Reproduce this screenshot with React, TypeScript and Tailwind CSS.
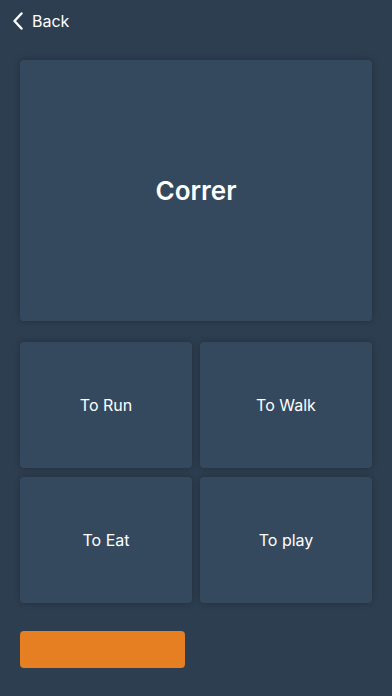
import React from "react";

const Card = ({ label }: { label: string }) => (
  <div className="h-[126px] rounded-[4px] bg-[#34495e] shadow-[0_0_6px_rgba(0,0,0,0.25)] flex items-center justify-center">
    <span className="text-[16px] text-white">{label}</span>
  </div>
);

export default function App() {
  return (
    <div
      className="w-[392px] h-[696px] overflow-hidden bg-[#2d3e50] flex flex-col"
      style={{ fontFamily: "Inter, Roboto, 'Liberation Sans', sans-serif" }}
    >
      <div className="h-[42px] flex items-center pl-[12px] text-white">
        <svg width="12" height="18" viewBox="0 0 12 18" fill="none">
          <path d="M9.5 1.5 L2.5 9 L9.5 16.5" stroke="white" strokeWidth="2.4" strokeLinecap="round" strokeLinejoin="round" />
        </svg>
        <span className="ml-[8px] text-[16px] leading-none">Back</span>
      </div>
      <div className="px-[20px] pt-[18px] flex flex-col">
        <div className="h-[261px] rounded-[4px] bg-[#34495e] shadow-[0_0_6px_rgba(0,0,0,0.25)] flex items-center justify-center">
          <span className="text-[26px] font-semibold text-white">Correr</span>
        </div>
        <div className="mt-[21px] grid grid-cols-2 gap-[8px] gap-y-[9px]">
          <Card label="To Run" />
          <Card label="To Walk" />
          <Card label="To Eat" />
          <Card label="To play" />
        </div>
        <div className="mt-[28px] w-[165px] h-[37px] rounded-[4px] bg-[#e67e22]" />
      </div>
    </div>
  );
}
